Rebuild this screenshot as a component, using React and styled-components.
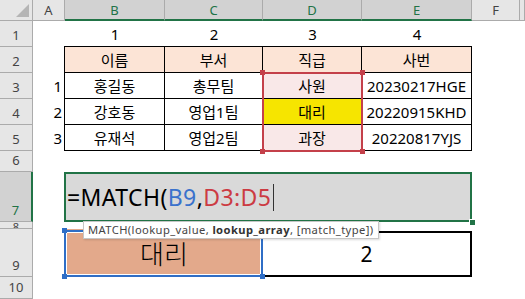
import React from "react";
import styled, { createGlobalStyle } from "styled-components";

const GlobalStyle = createGlobalStyle`
  body {
    margin: 0;
    background: #fff;
    overflow: hidden;
  }
`;

const GREEN = "#217346";
const RED = "#c4404a";
const BLUE = "#2f6ec6";

const Sheet = styled.div`
  display: grid;
  grid-template-columns: 33px 32px 100px 98px 99px 110px 48px 1fr;
  grid-template-rows: 21px 26px 26px 26px 26px 26px 21px 50px 7px 48px 1fr;
  width: 525px;
  height: 299px;
  overflow: hidden;
  font-family: "Noto Sans", "Noto Sans CJK KR", sans-serif;
  color: #000;
`;

const Corner = styled.div`
  grid-column: 1;
  grid-row: 1;
  background: #e6e6e6;
  border-right: 1px solid #ababab;
  border-bottom: 1px solid #ababab;
  display: flex;
  align-items: flex-end;
  justify-content: flex-end;
  padding: 0 3px 3px 0;
  box-sizing: border-box;
`;

const ColHeader = styled.div`
  grid-row: 1;
  grid-column: ${(p) => p.$col};
  background: ${(p) => (p.$selected ? "#d2d2d2" : "#e6e6e6")};
  color: ${(p) => (p.$selected ? GREEN : "#444")};
  border-right: 1px solid #ababab;
  border-bottom: ${(p) => (p.$selected ? `2px solid ${GREEN}` : "1px solid #ababab")};
  box-sizing: border-box;
  display: flex;
  align-items: center;
  justify-content: center;
  font-size: 13px;
`;

const RowHeader = styled.div`
  grid-column: 1;
  grid-row: ${(p) => p.$row};
  background: ${(p) => (p.$selected ? "#d2d2d2" : "#e6e6e6")};
  color: ${(p) => (p.$selected ? GREEN : "#444")};
  border-right: ${(p) => (p.$selected ? `2px solid ${GREEN}` : "1px solid #ababab")};
  border-bottom: 1px solid #ababab;
  box-sizing: border-box;
  display: flex;
  align-items: flex-end;
  justify-content: center;
  padding-bottom: ${(p) => (p.$tiny ? 0 : "2px")};
  font-size: ${(p) => (p.$tiny ? "11px" : "13px")};
  line-height: ${(p) => (p.$tiny ? "2px" : "17px")};
  overflow: hidden;
`;

const Cell = styled.div`
  grid-column: ${(p) => p.$col};
  grid-row: ${(p) => p.$row};
  display: flex;
  align-items: center;
  justify-content: ${(p) => p.$justify || "center"};
  padding-right: ${(p) => (p.$justify === "flex-end" ? "3px" : 0)};
  font-size: 15px;
`;

const Table = styled.div`
  grid-column: 3 / 7;
  grid-row: 3 / 7;
  display: grid;
  grid-template-columns: 100px 98px 99px 110px;
  grid-template-rows: repeat(4, 26px);
  border-left: 1px solid #000;
  border-top: 1px solid #000;
  margin: -1px 0 0 -1px;
`;

const TableCell = styled.div`
  background: ${(p) => p.$bg || "#fff"};
  border-right: 1px solid #000;
  border-bottom: 1px solid #000;
  display: flex;
  align-items: center;
  justify-content: center;
  font-size: 15px;
  grid-column: ${(p) => p.$col || "auto"};
  grid-row: ${(p) => p.$row || "auto"};
`;

const RangeMark = styled.div`
  grid-column: 3;
  grid-row: 2 / 5;
  position: relative;
  margin: -1px -1px -1px -1px;
  border: 2px solid ${RED};
  pointer-events: none;
`;

const Handle = styled.span`
  position: absolute;
  width: 5px;
  height: 5px;
  background: ${(p) => p.$color};
  ${(p) => (p.$top ? "top: -4px;" : "bottom: -4px;")}
  ${(p) => (p.$left ? "left: -4px;" : "right: -4px;")}
`;

const FormulaCell = styled.div`
  grid-column: 3 / 7;
  grid-row: 8;
  position: relative;
  margin-left: -1px;
  background: #d9d9d9;
  border: 2px solid ${GREEN};
  display: flex;
  align-items: center;
  padding-left: 1px;
  font-size: 23px;
  letter-spacing: 0.4px;
`;

const Ref = styled.span`
  color: ${(p) => p.$color};
`;

const Caret = styled.span`
  display: inline-block;
  width: 1px;
  height: 27px;
  background: #333;
  margin-left: 2px;
`;

const FillHandle = styled.span`
  position: absolute;
  right: -5px;
  bottom: -5px;
  width: 5px;
  height: 5px;
  background: ${GREEN};
  border-left: 1px solid #fff;
  border-top: 1px solid #fff;
`;

const Tooltip = styled.div`
  position: absolute;
  left: 17px;
  top: calc(100% + 1px);
  z-index: 3;
  background: #fff;
  border: 1px solid #c6c6c6;
  box-shadow: 1px 1px 2px rgba(0, 0, 0, 0.15);
  padding: 0 4px;
  height: 16px;
  line-height: 16px;
  font-size: 11.2px;
  color: #444;
  white-space: nowrap;
  b {
    color: #333;
  }
`;

const LookupCell = styled.div`
  grid-column: 3 / 5;
  grid-row: 10;
  background: #e3a98b;
  display: flex;
  align-items: center;
  justify-content: center;
  font-size: 26px;
  font-weight: 300;
  font-family: "Noto Sans CJK KR", sans-serif;
  padding-bottom: 2px;
`;

const LookupMark = styled.div`
  grid-column: 3 / 5;
  grid-row: 10;
  position: relative;
  margin: 1px 0 0 -1px;
  border: 2px solid ${BLUE};
  box-shadow: inset 0 0 0 1px #fff;
  pointer-events: none;
`;

const ResultCell = styled.div`
  grid-column: 5 / 7;
  grid-row: 10;
  margin-top: 2px;
  border: 2px solid #000;
  border-left-width: 0;
  display: flex;
  align-items: center;
  justify-content: center;
  font-size: 21px;
`;

const cols = ["A", "B", "C", "D", "E", "F", ""];
const rows = [
  ["이름", "부서", "직급", "사번"],
  ["홍길동", "총무팀", "사원", "20230217HGE"],
  ["강호동", "영업1팀", "대리", "20220915KHD"],
  ["유재석", "영업2팀", "과장", "20220817YJS"],
];

const cellBg = (r, c) => {
  if (r === 0) return "#fce4d6";
  if (c === 2) return r === 2 ? "#f6e500" : "#f9e8e8";
  return "#fff";
};

const App = () => {
  return (
    <>
      <GlobalStyle />
      <Sheet>
        <Corner>
          <svg width="13" height="13" viewBox="0 0 13 13">
            <polygon points="13,0 13,13 0,13" fill="#b5b5b5" />
          </svg>
        </Corner>
        {cols.map((c, i) => (
          <ColHeader key={i} $col={i + 2} $selected={i >= 1 && i <= 4}>
            {c}
          </ColHeader>
        ))}
        {[1, 2, 3, 4, 5, 6, 7, 8, 9, 10].map((n) => (
          <RowHeader key={n} $row={n + 1} $selected={n === 7} $tiny={n === 8}>
            {n}
          </RowHeader>
        ))}

        {[1, 2, 3, 4].map((n, i) => (
          <Cell key={n} $row={2} $col={i + 3}>
            {n}
          </Cell>
        ))}
        {[1, 2, 3].map((n) => (
          <Cell key={n} $row={n + 3} $col={2} $justify="flex-end">
            {n}
          </Cell>
        ))}

        <Table>
          {rows.map((r, ri) =>
            r.map((v, ci) => (
              <TableCell key={`${ri}-${ci}`} $row={ri + 1} $col={ci + 1} $bg={cellBg(ri, ci)}>
                {v}
              </TableCell>
            ))
          )}
          <RangeMark>
            <Handle $color={RED} $top $left />
            <Handle $color={RED} $top />
            <Handle $color={RED} $left />
            <Handle $color={RED} />
          </RangeMark>
        </Table>

        <FormulaCell>
          <span>=MATCH(</span>
          <Ref $color="#3a72cc">B9</Ref>
          <span>,</span>
          <Ref $color="#cc3b43">D3:D5</Ref>
          <Caret />
          <FillHandle />
          <Tooltip>
            MATCH(lookup_value, <b>lookup_array</b>, [match_type])
          </Tooltip>
        </FormulaCell>

        <LookupCell>대리</LookupCell>
        <LookupMark>
          <Handle $color={BLUE} $top $left />
          <Handle $color={BLUE} $left />
          <Handle $color={BLUE} />
        </LookupMark>
        <ResultCell>2</ResultCell>
      </Sheet>
    </>
  );
};

export default App;
